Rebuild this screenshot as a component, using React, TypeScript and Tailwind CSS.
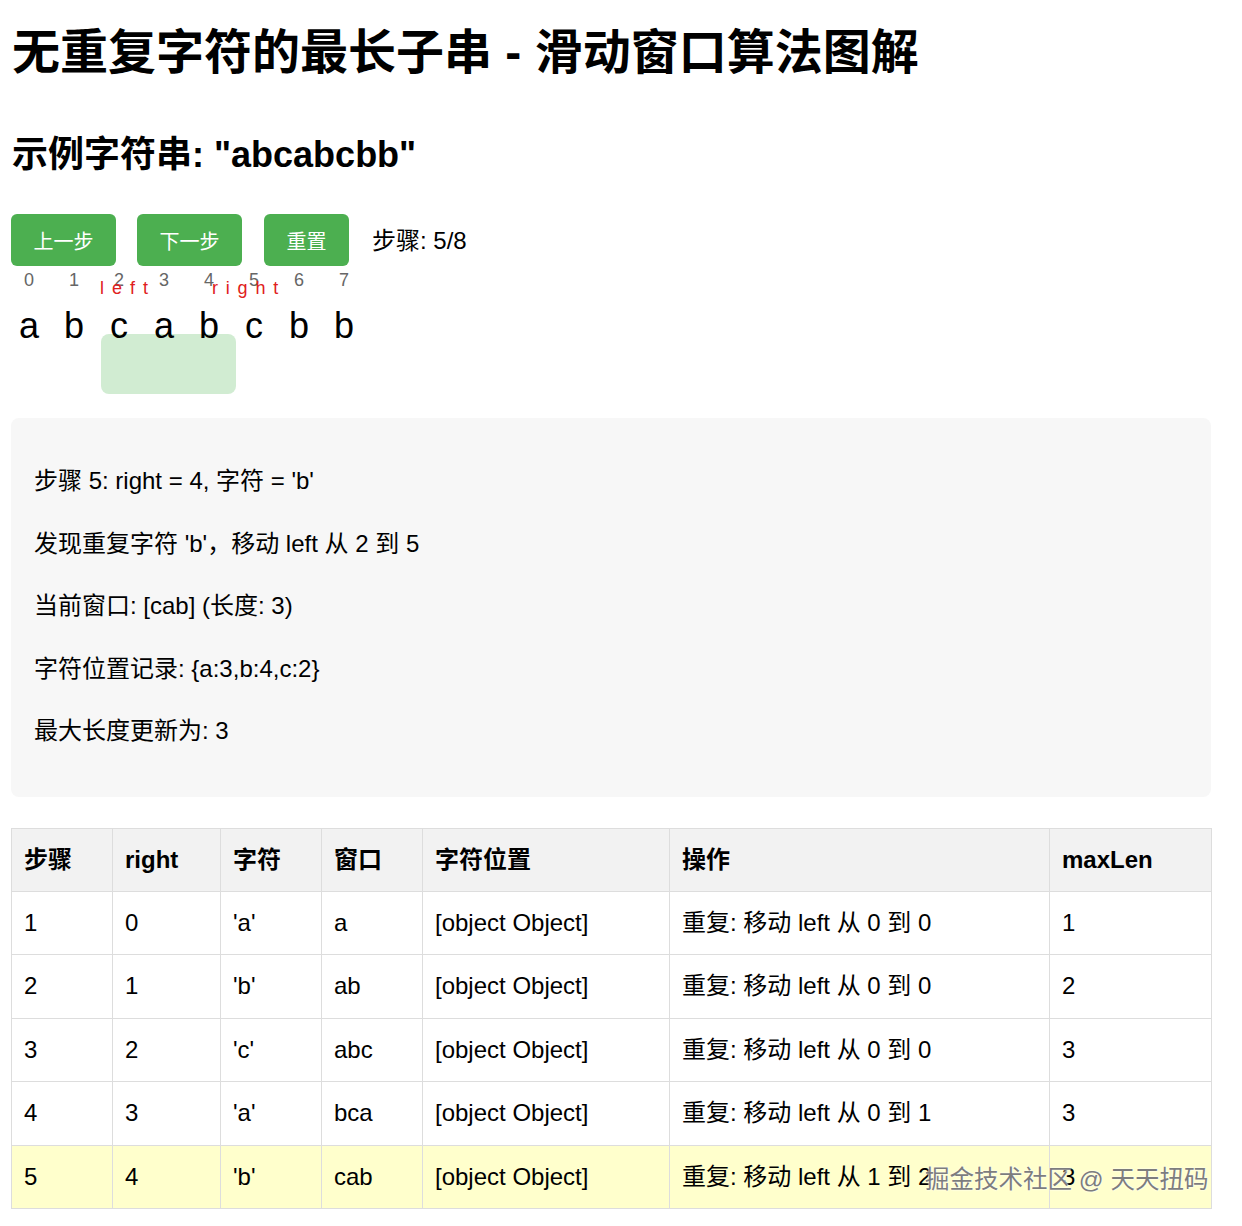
import React from "react";

const FONT = "font-['Liberation_Sans','Noto_Sans_CJK_SC',sans-serif]";

const chars = ["a", "b", "c", "a", "b", "c", "b", "b"];

const info = [
  "步骤 5: right = 4, 字符 = 'b'",
  "发现重复字符 'b'，移动 left 从 2 到 5",
  "当前窗口: [cab] (长度: 3)",
  "字符位置记录: {a:3,b:4,c:2}",
  "最大长度更新为: 3",
];

const headers = ["步骤", "right", "字符", "窗口", "字符位置", "操作", "maxLen"];
const widths = ["w-[101px]", "w-[108px]", "w-[101px]", "w-[101px]", "w-[247px]", "w-[380px]", "w-[162px]"];

const rows = [
  ["1", "0", "'a'", "a", "[object Object]", "重复: 移动 left 从 0 到 0", "1"],
  ["2", "1", "'b'", "ab", "[object Object]", "重复: 移动 left 从 0 到 0", "2"],
  ["3", "2", "'c'", "abc", "[object Object]", "重复: 移动 left 从 0 到 0", "3"],
  ["4", "3", "'a'", "bca", "[object Object]", "重复: 移动 left 从 0 到 1", "3"],
  ["5", "4", "'b'", "cab", "[object Object]", "重复: 移动 left 从 1 到 2", "3"],
];

export default function App() {
  return (
    <div className={`${FONT} relative min-h-[1226px] bg-white text-black pl-[11px] pt-[25px]`}>
      <div className="w-[1200px]">
        <h1 className="h-[56px] text-[48px] leading-[56px] font-bold pl-[1px] whitespace-nowrap">
          无重复字符的最长子串 - 滑动窗口算法图解
        </h1>
        <h2 className="mt-[53px] h-[42px] text-[36px] leading-[42px] font-bold pl-[1px]">
          示例字符串: "abcabcbb"
        </h2>

        <div className="mt-[38px] flex items-center h-[52px]">
          <button className="h-[52px] w-[105px] rounded-[6px] bg-[#4caf50] text-white text-[20px] pt-[3px] mr-[21px]">
            上一步
          </button>
          <button className="h-[52px] w-[105px] rounded-[6px] bg-[#4caf50] text-white text-[20px] pt-[3px] mr-[22px]">
            下一步
          </button>
          <button className="h-[52px] w-[85px] rounded-[6px] bg-[#4caf50] text-white text-[20px] pt-[3px] mr-[23px]">
            重置
          </button>
          <span className="text-[24px] leading-[28px] pt-[2px]">步骤: 5/8</span>
        </div>

        <div className="relative h-[152px] pt-[4px]">
          <div className="absolute left-[90px] top-[68px] w-[135px] h-[60px] rounded-[8px] bg-[#d1ecd2]" />
          <div className="relative flex h-[20px]">
            {chars.map((_, i) => (
              <div key={i} className="w-[36px] mr-[9px] text-center text-[18px] leading-[20px] text-[#666]">
                {i}
              </div>
            ))}
          </div>
          <div className="relative mt-[16px] flex h-[40px]">
            {chars.map((c, i) => (
              <div key={i} className="w-[36px] mr-[9px] text-center text-[36px] leading-[40px]">
                {c}
              </div>
            ))}
          </div>
          <span className="absolute left-[89px] top-[12px] text-[18px] leading-[20px] tracking-[8px] text-[#e02020]">
            left
          </span>
          <span className="absolute left-[201px] top-[12px] text-[18px] leading-[20px] tracking-[7.8px] text-[#e02020]">
            right
          </span>
        </div>

        <div className="bg-[#f7f7f7] rounded-[8px] pl-[23px] pt-[32px] pb-[34px]">
          {info.map((t, i) => (
            <div key={i} className="h-[62.5px] flex items-center text-[24px]">
              {t}
            </div>
          ))}
        </div>

        <table className="mt-[31px] w-[1200px] border-collapse table-fixed text-[24px]">
          <thead>
            <tr className="bg-[#f2f2f2]">
              {headers.map((h, i) => (
                <th
                  key={i}
                  className={`${widths[i]} h-[63px] border border-[#ddd] px-[12px] text-left font-bold`}
                >
                  {h}
                </th>
              ))}
            </tr>
          </thead>
          <tbody>
            {rows.map((r, ri) => (
              <tr key={ri} className={ri === 4 ? "bg-[#ffffcc]" : "bg-white"}>
                {r.map((c, ci) => (
                  <td key={ci} className="h-[63.5px] border border-[#ddd] px-[12px] whitespace-nowrap">
                    {c}
                  </td>
                ))}
              </tr>
            ))}
          </tbody>
        </table>
      </div>

      <div className="absolute left-[925px] top-[1163px] text-[24.5px] leading-[34px] text-[#7d7d7d] whitespace-nowrap [text-shadow:0_0_2px_#fff,0_0_1px_#fff]">
        掘金技术社区 @ 天天扭码
      </div>
    </div>
  );
}
